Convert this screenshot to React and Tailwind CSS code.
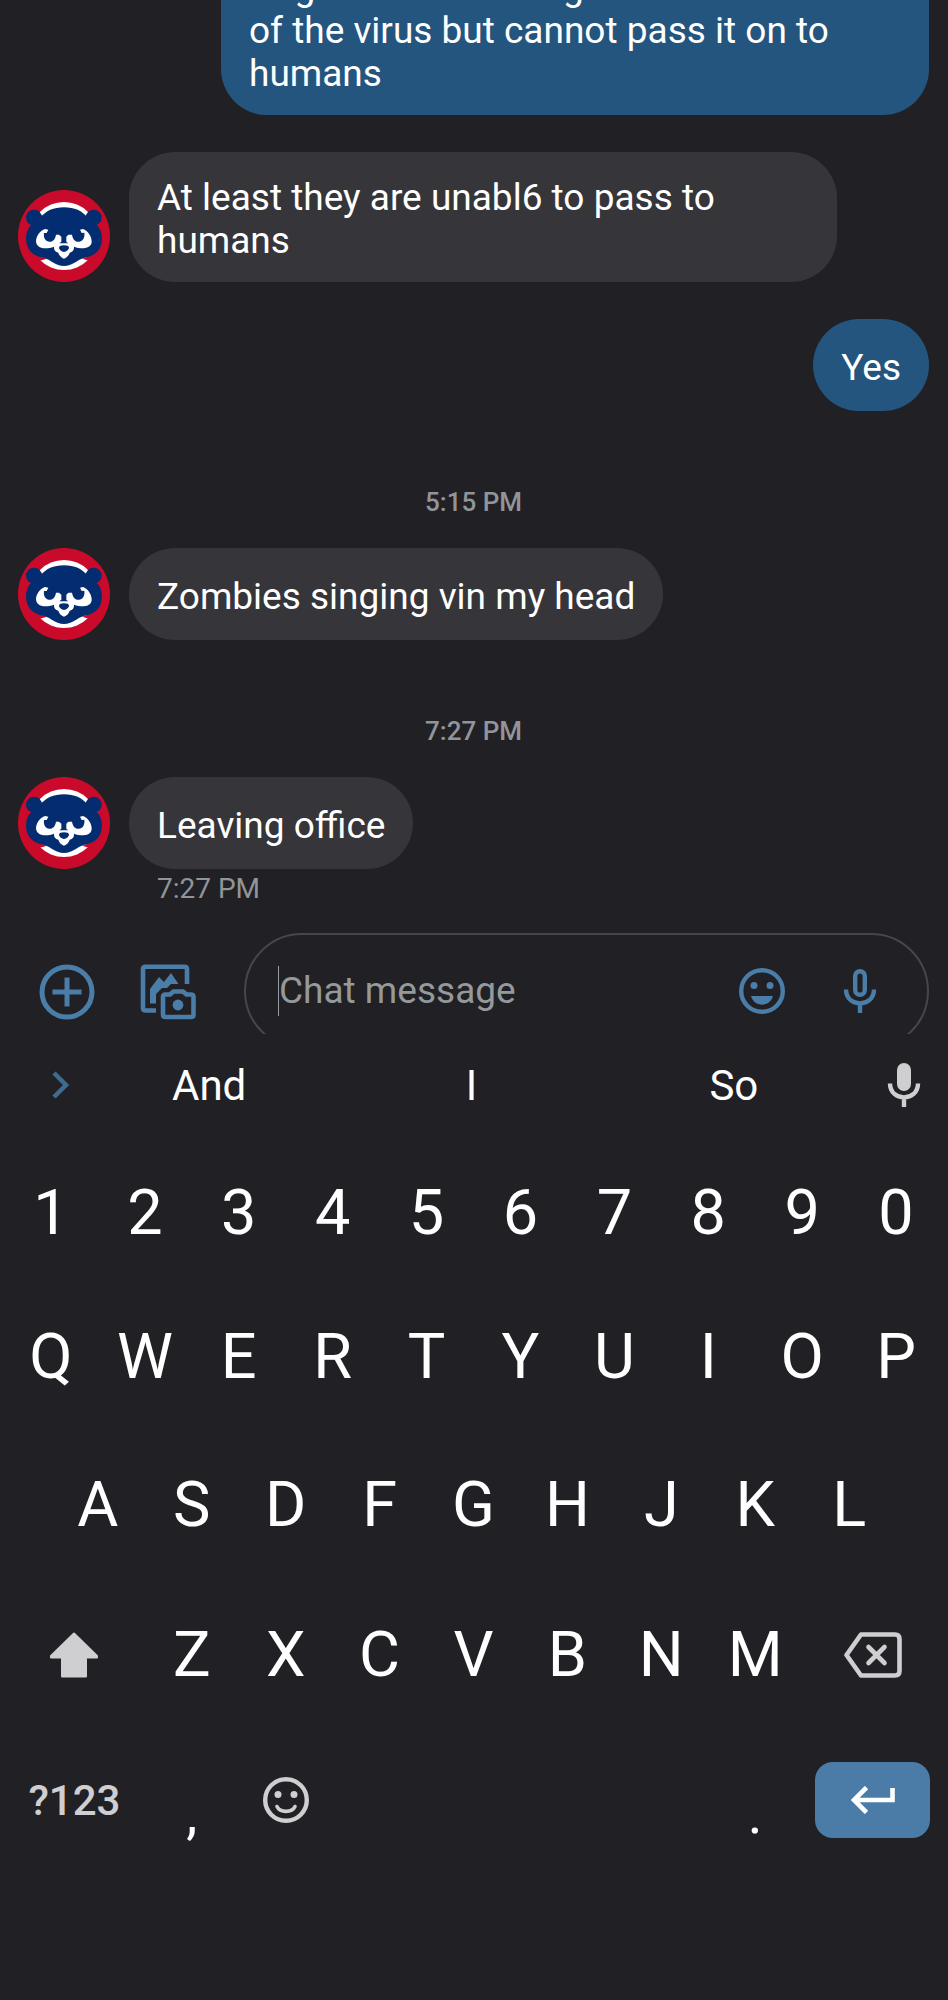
import React from "react";

const thread = [
  {
    id: 1,
    from: "me",
    text: "Dogs and cats can get a lower version of the virus but cannot pass it on to humans",
  },
  { id: 2, from: "them", text: "At least they are unabl6 to pass to humans" },
  { id: 3, from: "me", text: "Yes" },
  { id: 4, divider: "5:15 PM" },
  { id: 5, from: "them", text: "Zombies singing vin my head" },
  { id: 6, divider: "7:27 PM" },
  { id: 7, from: "them", text: "Leaving office", sent: "7:27 PM" },
];

const digits = ["1", "2", "3", "4", "5", "6", "7", "8", "9", "0"];
const topRow = ["Q", "W", "E", "R", "T", "Y", "U", "I", "O", "P"];
const homeRow = ["A", "S", "D", "F", "G", "H", "J", "K", "L"];
const bottomRow = ["Z", "X", "C", "V", "B", "N", "M"];

const Avatar = () => (
  <svg
    className="size-[92px] shrink-0"
    viewBox="25 32 276 276"
    role="img"
    aria-label="Bear avatar"
  >
    <circle cx="163" cy="170" r="138" fill="#ca0a2a" />
    <circle cx="163" cy="170" r="102" fill="#fff" />
    <path
      d="M100 106 L52 130 L52 215 L112 238 L70 250 L40 170 Z M230 106 L274 130 L274 215 L218 238 L256 250 L290 170 Z"
      fill="#ca0a2a"
    />
    <circle cx="73" cy="115" r="24" fill="#032d70" />
    <circle cx="252" cy="115" r="24" fill="#032d70" />
    <path
      d="M92 116 C108 94 132 84 163 84 C194 84 218 94 234 116 L264 140 C278 156 280 180 273 200 C266 220 248 232 222 236 C202 242 188 260 163 260 C138 260 124 242 104 236 C78 232 60 220 53 200 C46 180 48 156 62 140 Z"
      fill="#032d70"
    />
    <path
      d="M106 149 C92 154 80 169 79 185 C79 198 90 207 106 207 C116 207 125 206 133 202 C132 212 137 218 146 220 C148 229 155 235 163 238 C171 235 178 229 180 220 C189 218 194 212 193 202 C201 206 210 207 222 207 C237 206 247 198 246 185 C245 169 233 154 220 149 L211 151 L216 161 L224 160 C226 176 219 186 208 187 C198 188 190 182 187 166 L176 166 L170 172 L170 188 L176 192 L149 192 L155 187 L155 172 L148 166 L139 166 C136 182 128 188 118 187 C107 186 101 176 103 161 L111 161 L116 151 Z"
      fill="#fff"
    />
    <path
      d="M148 205 C148 200 155 198 163 198 C171 198 178 200 178 205 C178 210 170 217 163 218 C156 217 148 210 148 205 Z"
      fill="#032d70"
    />
  </svg>
);

const Smile = ({ children, className }) => (
  <svg className={className} viewBox="0 0 46 46" fill="currentColor">
    <circle
      cx="23"
      cy="23"
      r="20.8"
      fill="none"
      stroke="currentColor"
      strokeWidth="4.4"
    />
    <circle cx="15" cy="17.5" r="3.5" />
    <circle cx="31" cy="17.5" r="3.5" />
    {children}
  </svg>
);

const Mic = ({ filled }) => (
  <svg
    className="h-11 w-[34px]"
    viewBox="0 0 34 44"
    fill="none"
    stroke="currentColor"
    strokeWidth="4.4"
  >
    <rect
      x="12.2"
      y="2.2"
      width="9.6"
      height="23.6"
      rx="4.8"
      fill={filled ? "currentColor" : "none"}
    />
    <path d="M3 20.5 C3 39 31 39 31 20.5 M17 34 V44" />
  </svg>
);

const bubble =
  "flex min-h-[92px] max-w-[708px] items-center rounded-[46px] px-7 pt-6 pb-5 leading-[43px]";

const Message = ({ from, text, sent }) => {
  if (from === "me") {
    return (
      <div className="flex justify-end">
        <p className={`${bubble} bg-[#24557e]`}>{text}</p>
      </div>
    );
  }

  return (
    <div>
      <div className="flex items-end gap-[19px]">
        <Avatar />
        <p className={`${bubble} bg-[#36353a]`}>{text}</p>
      </div>
      {sent && (
        <p className="pl-[139px] pt-1 text-[28px] leading-8 text-[#919599]">
          {sent}
        </p>
      )}
    </div>
  );
};

const Composer = () => (
  <form
    className="flex h-[101px] items-start overflow-hidden pl-[39px] pr-[19px] text-[#4a7da8]"
    onSubmit={(e) => e.preventDefault()}
  >
    <button type="button" aria-label="Add" className="mt-[31px] shrink-0">
      <svg
        className="size-14"
        viewBox="0 0 56 56"
        fill="none"
        stroke="currentColor"
        strokeWidth="5"
      >
        <circle cx="28" cy="28" r="25" />
        <path d="M28 13.5 V42.5 M13.5 28 H42.5" />
      </svg>
    </button>
    <button
      type="button"
      aria-label="Gallery and camera"
      className="ml-[45px] mt-[31px] shrink-0"
    >
      <svg
        className="size-14"
        viewBox="0 0 56 56"
        fill="none"
        stroke="currentColor"
        strokeWidth="4.6"
      >
        <path d="M47 20 V5 Q47 2.8 44.5 2.8 H5.5 Q3 2.8 3 5 V44 Q3 46.5 5.5 46.5 H16" />
        <path
          d="M10 39.5 V25 L19 13 L24 18 L31 9 L38.5 20 H31 L27 24 H22 L16 30 V39.5 Z"
          fill="currentColor"
          stroke="none"
        />
        <path d="M23 33 Q23 30.5 25.5 30.5 H30 L33.5 27.5 H43 L46.5 30.5 H51 Q53.5 30.5 53.5 33 V50.5 Q53.5 53 51 53 H25.5 Q23 53 23 50.5 Z" />
        <circle cx="38" cy="41" r="5.4" fill="currentColor" stroke="none" />
      </svg>
    </button>
    <div className="ml-12 flex h-[116px] min-w-0 flex-1 items-center rounded-full border-2 border-[#47464b] pl-8 pr-[50px]">
      <span className="h-[50px] w-px shrink-0 bg-[#9a9ea1]" />
      <input
        type="text"
        aria-label="Chat message"
        placeholder="Chat message"
        className="min-w-0 flex-1 bg-transparent text-[37px] text-white outline-none placeholder:text-[#949a9c]"
      />
      <button type="button" aria-label="Emoji">
        <Smile className="size-[46px]">
          <path d="M12 28 H34 C31 39.5 15 39.5 12 28 Z" />
        </Smile>
      </button>
      <button type="button" aria-label="Voice message" className="ml-[58px]">
        <Mic />
      </button>
    </div>
  </form>
);

const Key = ({ label, className = "col-span-2" }) => (
  <button type="button" className={className}>
    {label}
  </button>
);

const Keyboard = () => (
  <div className="bg-[#212025] pb-32 pl-1 pr-[5px]">
    <div className="grid h-[102px] grid-cols-[74px_1fr_1fr_1fr_78px] items-center text-[42px]">
      <button
        type="button"
        aria-label="More"
        className="flex justify-end pr-2 text-[#3f6b90]"
      >
        <svg
          className="h-7 w-[18px]"
          viewBox="0 0 18 28"
          fill="none"
          stroke="currentColor"
          strokeWidth="4.5"
        >
          <path d="M2 2 L14 14 L2 26" />
        </svg>
      </button>
      <Key label="And" className="" />
      <Key label="I" className="" />
      <Key label="So" className="" />
      <button
        type="button"
        aria-label="Voice typing"
        className="flex justify-center text-[#cfced0]"
      >
        <Mic filled />
      </button>
    </div>

    <div className="text-[63px]">
      <div className="grid h-[148px] grid-cols-20 pt-1.5">
        {digits.map((digit) => (
          <Key key={digit} label={digit} />
        ))}
      </div>
      <div className="grid h-[146px] grid-cols-20">
        {topRow.map((letter) => (
          <Key key={letter} label={letter} />
        ))}
      </div>
      <div className="grid h-[150px] grid-cols-18 px-[5%]">
        {homeRow.map((letter) => (
          <Key key={letter} label={letter} />
        ))}
      </div>
      <div className="grid h-[150px] grid-cols-20">
        <button
          type="button"
          aria-label="Shift"
          className="col-span-3 flex items-center justify-center text-[#cfced0]"
        >
          <svg className="h-[46px] w-[50px]" viewBox="0 0 50 46">
            <path
              d="M25 1.5 L48 24 V25.5 H37 V44.5 H13 V25.5 H2 V24 Z"
              fill="currentColor"
              stroke="currentColor"
              strokeWidth="2"
              strokeLinejoin="round"
            />
          </svg>
        </button>
        {bottomRow.map((letter) => (
          <Key key={letter} label={letter} />
        ))}
        <button
          type="button"
          aria-label="Backspace"
          className="col-span-3 flex items-center justify-center text-[#cfced0]"
        >
          <svg
            className="h-[46px] w-[58px]"
            viewBox="0 0 58 46"
            fill="none"
            stroke="currentColor"
            strokeWidth="4.6"
            strokeLinejoin="round"
            strokeLinecap="round"
          >
            <path d="M17 2.5 H51 Q55.5 2.5 55.5 7 V39 Q55.5 43.5 51 43.5 H17 L2.5 23 Z" />
            <path d="M24.5 15 L40.5 31 M40.5 15 L24.5 31" />
          </svg>
        </button>
      </div>
    </div>

    <div className="grid h-[140px] grid-cols-20 items-center">
      <button
        type="button"
        className="col-span-3 text-[42px] font-medium text-[#cfced0]"
      >
        ?123
      </button>
      <Key label="," className="col-span-2 pt-7 text-[56px]" />
      <button
        type="button"
        aria-label="Emoji keyboard"
        className="col-span-2 flex justify-center text-[#cfced0]"
      >
        <Smile className="size-[46px]">
          <path
            d="M14 29.5 C17 36 29 36 32 29.5"
            fill="none"
            stroke="currentColor"
            strokeWidth="3.6"
            strokeLinecap="round"
          />
        </Smile>
      </button>
      <button type="button" aria-label="Space" className="col-span-8 h-full" />
      <Key label="." className="col-span-2 pt-7 text-[56px]" />
      <button
        type="button"
        aria-label="Enter"
        className="col-span-3 mx-[13px] flex h-[76px] items-center justify-center rounded-[18px] bg-[#4b7ca7]"
      >
        <svg
          className="h-7 w-11"
          viewBox="0 0 44 28"
          fill="none"
          stroke="currentColor"
          strokeWidth="4.6"
        >
          <path d="M41.5 2 V14 H4 M15.5 1.5 L3 14 L15.5 26.5" />
        </svg>
      </button>
    </div>
  </div>
);

export default function App() {
  return (
    <main className="flex min-h-screen flex-col bg-[#212025] font-['Roboto',sans-serif] text-[37px] text-white">
      {/* older messages run off the top of the list */}
      <div className="flex h-[933px] flex-col justify-end overflow-hidden pb-7 pl-[18px] pr-[19px]">
        <div className="flex flex-col gap-[37px]">
          {thread.map((item) =>
            item.divider ? (
              <p
                key={item.id}
                className="-mb-[7px] pt-[38px] text-center text-[26px] font-medium leading-8 text-[#919599]"
              >
                {item.divider}
              </p>
            ) : (
              <Message key={item.id} {...item} />
            )
          )}
        </div>
      </div>
      <Composer />
      <Keyboard />
    </main>
  );
}
